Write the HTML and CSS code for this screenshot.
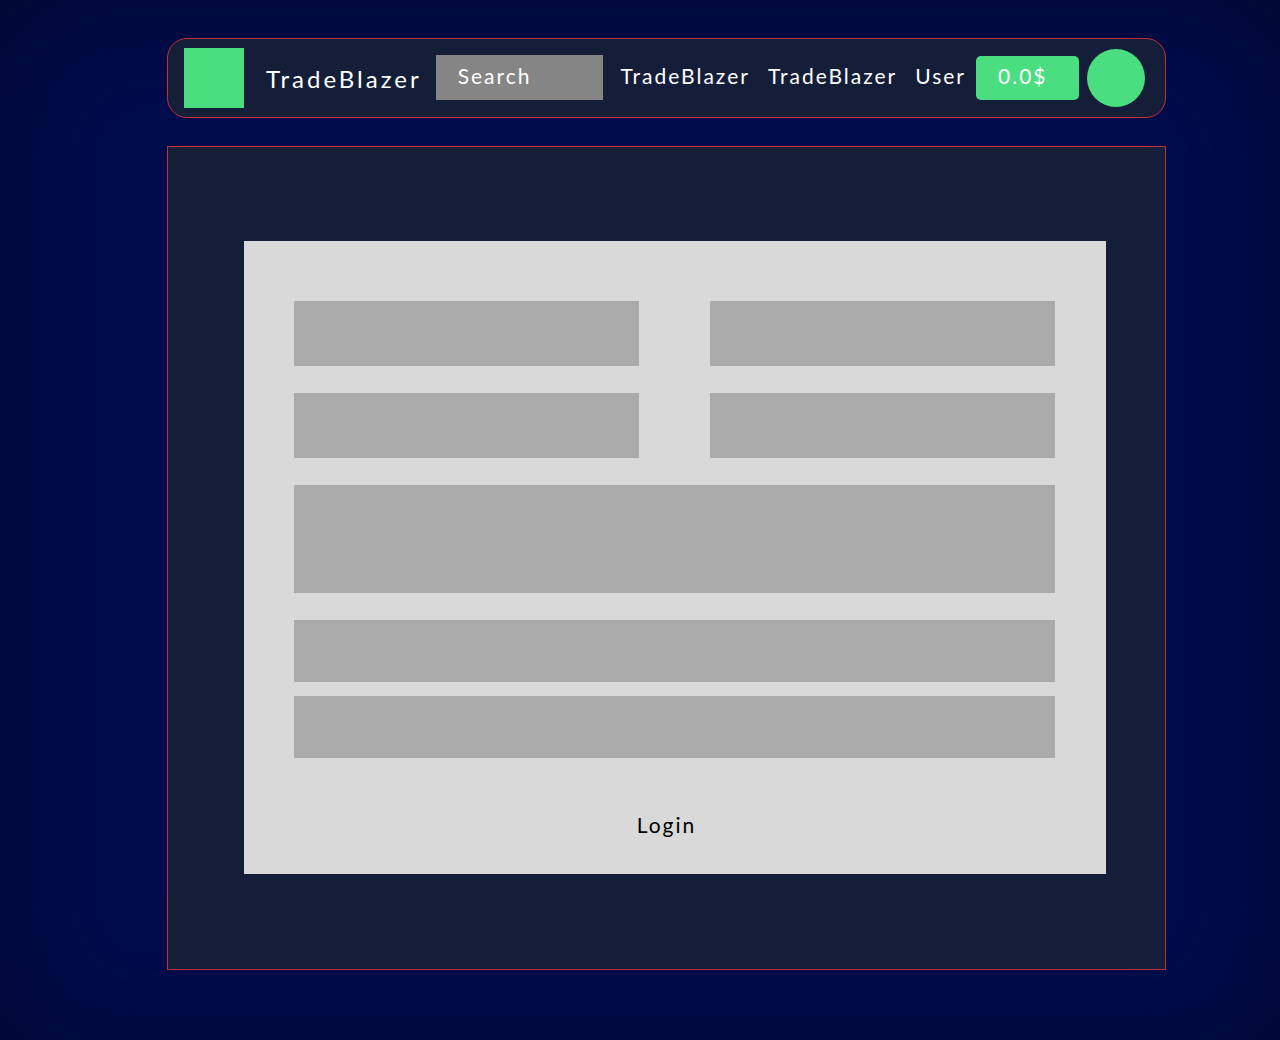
FILE: index.html
```html
<!DOCTYPE html>
<html lang="en">
<head>
<meta charset="utf-8">
<meta name="viewport" content="width=device-width, initial-scale=1">
<title>TradeBlazer</title>
<link rel="stylesheet" href="styles.css">
</head>
<body>
<div class="page">
  <header class="topbar">
    <div class="logo"></div>
    <div class="brand">TradeBlazer</div>
    <input class="search" type="search" placeholder="Search" aria-label="Search">
    <nav class="links">
      <a href="#">TradeBlazer</a>
      <a href="#">TradeBlazer</a>
      <a href="#">User</a>
    </nav>
    <button class="balance" type="button">0.0$</button>
    <button class="avatar" type="button" aria-label="Account"></button>
  </header>
  <main class="panel">
    <form class="card">
      <input class="field" type="text" aria-label="First name">
      <input class="field" type="text" aria-label="Last name">
      <input class="field" type="text" aria-label="Username">
      <input class="field" type="email" aria-label="Email">
      <textarea class="field field-area" aria-label="About"></textarea>
      <div class="passwords">
        <input class="field field-short" type="password" aria-label="Password">
        <input class="field field-short" type="password" aria-label="Repeat password">
      </div>
      <div class="actions"><button class="login" type="submit">Login</button></div>
    </form>
  </main>
</div>
</body>
</html>
```
FILE: styles.css
```css
* {
  box-sizing: border-box;
}

body {
  margin: 0;
  background: #000829;
  font-family: Lato, sans-serif;
  font-size: 21px;
  line-height: 24px;
  letter-spacing: 2px;
  color: #fff;
}

input,
textarea,
button {
  margin: 0;
  border: 0;
  border-radius: 0;
  font: inherit;
  letter-spacing: inherit;
  color: inherit;
}

button {
  cursor: pointer;
}

.page {
  display: flex;
  flex-direction: column;
  gap: 28px;
  min-height: 100vh;
  padding: 38px 114px 70px 167px;
  background: #000c4e;
  box-shadow: inset 0 10px 120px 10px #000832;
}

.topbar {
  display: flex;
  align-items: center;
  height: 80px;
  padding: 0 20px 0 16px;
  border: 1px solid #bf3036;
  border-radius: 20px;
  background: #151e39;
}

.logo {
  flex: none;
  width: 60px;
  height: 60px;
  background: #4ade80;
}

.brand {
  margin: 2px 14px 0 22px;
  font-size: 24px;
  letter-spacing: 3px;
}

.search {
  flex: 1;
  min-width: 0;
  height: 45px;
  margin-bottom: 2px;
  padding: 0 22px 4px;
  background: #858585;
  appearance: none;
}

.search::placeholder {
  color: #fff;
  opacity: 1;
}

.links {
  display: flex;
  gap: 18px;
  padding: 0 10px 4px 18px;
}

.links a {
  color: inherit;
  text-decoration: none;
}

.balance {
  width: 103px;
  height: 44px;
  padding: 0 22px 4px;
  border-radius: 5px;
  background: #4ade80;
  text-align: left;
}

.avatar {
  flex: none;
  width: 58px;
  height: 58px;
  margin-left: 8px;
  border-radius: 50%;
  background: #4ade80;
}

.panel {
  flex: 1;
  padding: 94px 59px 94px 76px;
  border: 1px solid #bf3036;
  background: #151e39;
}

.card {
  display: grid;
  grid-template-columns: 1fr 1fr;
  gap: 27px 71px;
  padding: 60px 51px 37px 50px;
  background: #d9d9d9;
}

.field {
  display: block;
  width: 100%;
  height: 65px;
  padding: 0 20px;
  background: #aaa;
}

.field-area {
  grid-column: 1 / -1;
  height: 108px;
  padding: 20px;
  resize: none;
}

.passwords {
  display: grid;
  grid-column: 1 / -1;
  gap: 14px;
}

.field-short {
  height: 62px;
}

.actions {
  grid-column: 1 / -1;
  padding: 28px 16px 0 0;
  text-align: center;
}

.login {
  padding: 0;
  background: none;
  color: #000;
}
```
